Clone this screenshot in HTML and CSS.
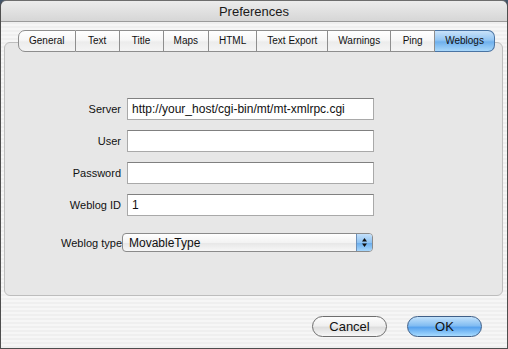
FILE: index.html
```html
<!DOCTYPE html>
<html lang="en">
<head>
    <meta charset="UTF-8" />
    <title>Preferences</title>
    <link rel="stylesheet" href="styles.css">
</head>
<body>
    <div class="window">
        <div class="titlebar">Preferences</div>
        <div class="content">
            <div class="tabs">
                <div class="tab first">General</div>
                <div class="tab">Text</div>
                <div class="tab">Title</div>
                <div class="tab">Maps</div>
                <div class="tab">HTML</div>
                <div class="tab">Text Export</div>
                <div class="tab">Warnings</div>
                <div class="tab">Ping</div>
                <div class="tab last selected">Weblogs</div>
            </div>
            <div class="panel">
                <form class="form">
                    <label>Server</label>
                    <input type="text" value="http://your_host/cgi-bin/mt/mt-xmlrpc.cgi">

                    <label>User</label>
                    <input type="text">

                    <label>Password</label>
                    <input type="password">

                    <label>Weblog ID</label>
                    <input type="text" value="1">
                </form>
                <div class="type-row">
                    <label>Weblog type</label>
                    <div class="popup">
                        <span>MovableType</span>
                        <span class="stepper">
                            <svg width="7" height="11" viewBox="0 0 7 11">
                                <path d="M3.5 1 L6 4.5 L1 4.5 Z" fill="#111"/>
                                <path d="M3.5 10 L6 6.5 L1 6.5 Z" fill="#111"/>
                            </svg>
                        </span>
                    </div>
                </div>
            </div>
            <div class="buttons">
                <button type="button" class="btn">Cancel</button>
                <button type="button" class="btn default">OK</button>
            </div>
        </div>
    </div>
</body>
</html>
```

FILE: styles.css
```css
body {
    margin: 0;
    padding: 0;
    background-color: #43556a;
    font-family: "Liberation Sans", Arial, sans-serif;
    color: #111;
}
.window {
    width: 508px;
    height: 349px;
    box-sizing: border-box;
    border: 1px solid #4e4e4e;
    border-top-color: #6d6d6d;
    border-radius: 6px 6px 0 0;
    overflow: hidden;
    display: flex;
    flex-direction: column;
}
.titlebar {
    height: 20px;
    line-height: 21px;
    text-align: center;
    font-size: 13px;
    color: #1a1a1a;
    background: linear-gradient(#ececec, #d6d6d6);
    border-bottom: 1px solid #9a9a9a;
}
.content {
    flex: 1;
    background: repeating-linear-gradient(#efefef 0, #efefef 2px, #f6f6f6 2px, #f6f6f6 4px);
    padding: 8px 4px 0 3px;
}
.tabs {
    display: flex;
    margin-left: 14px;
    height: 22px;
    margin-bottom: -10px;
    position: relative;
    z-index: 1;
}
.tab {
    flex: none;
    box-sizing: border-box;
    min-width: 44px;
    height: 22px;
    line-height: 20px;
    padding: 0 10px;
    text-align: center;
    white-space: nowrap;
    font-size: 10px;
    border: 1px solid #8e8e8e;
    border-left: none;
    background: linear-gradient(#ffffff, #f7f7f7 45%, #ececec 55%, #f4f4f4);
}
.tab.first {
    border-left: 1px solid #8e8e8e;
    border-radius: 7px 0 0 7px;
}
.tab.last {
    border-radius: 0 7px 7px 0;
}
.tab.selected {
    border-color: #4a74a3;
    background: linear-gradient(#c9e2f9, #94c6f3 45%, #6fb0ec 55%, #a9d8fb);
}
.panel {
    height: 254px;
    box-sizing: border-box;
    background-color: #e7e7e7;
    border: 1px solid #bdbdbd;
    border-radius: 6px;
    padding-top: 55px;
}
.form {
    display: grid;
    grid-template-columns: 116px 247px;
    column-gap: 6px;
    row-gap: 10px;
    align-items: center;
}
.form label,
.type-row label {
    text-align: right;
    font-size: 11px;
}
.form input {
    box-sizing: border-box;
    height: 22px;
    margin: 0;
    padding: 0 4px;
    border: 1px solid #a9a9a9;
    border-top-color: #808080;
    background: #fff;
    font-family: "Liberation Sans", Arial, sans-serif;
    font-size: 12px;
    color: #111;
}
.type-row {
    display: grid;
    grid-template-columns: 117px 251px;
    align-items: center;
    margin-top: 17px;
}
.popup {
    box-sizing: border-box;
    height: 19px;
    display: flex;
    align-items: center;
    justify-content: space-between;
    border: 1px solid #8b8b8b;
    border-radius: 4px;
    background: linear-gradient(#ffffff, #f3f3f3 50%, #e6e6e6 51%, #f7f7f7);
    font-size: 12px;
    padding-left: 6px;
    overflow: hidden;
}
.stepper {
    width: 15px;
    height: 17px;
    display: flex;
    align-items: center;
    justify-content: center;
    border-left: 1px solid #6c8fb8;
    background: linear-gradient(#c4e0fa, #8fc3f2 50%, #66aaeb 51%, #a7d6fb);
}
.buttons {
    display: flex;
    justify-content: flex-end;
    gap: 20px;
    margin-top: 20px;
    padding-right: 21px;
}
.btn {
    width: 75px;
    height: 21px;
    padding: 0;
    border: 1px solid #6e6e6e;
    border-radius: 11px;
    font-family: "Liberation Sans", Arial, sans-serif;
    font-size: 13px;
    color: #111;
    background: linear-gradient(#fdfdfd, #f0f0f0 45%, #dedede 55%, #f7f7f7);
}
.btn.default {
    border-color: #3f5f88;
    background: linear-gradient(#c3e2fb, #83bdf2 45%, #58a3ee 55%, #a6dafe);
}
```
